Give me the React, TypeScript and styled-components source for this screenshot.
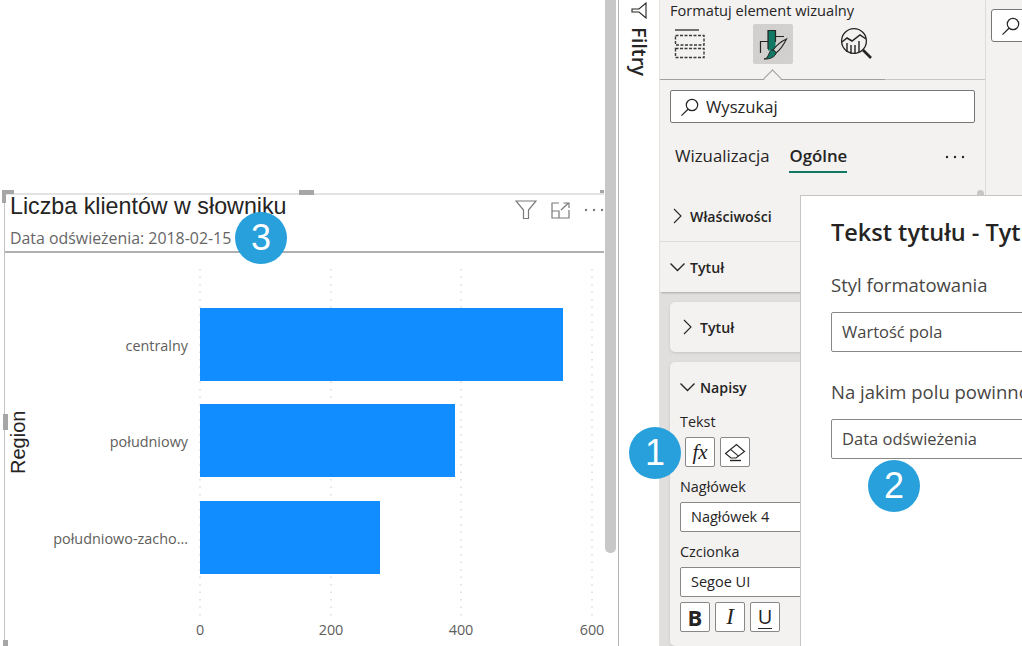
import React from 'react';
import styled, { createGlobalStyle } from 'styled-components';

const SEGOE = `'Open Sans', 'Noto Sans', sans-serif`;

const GlobalStyle = createGlobalStyle`
  html, body {
    margin: 0;
    padding: 0;
    background: #fff;
  }
  * {
    box-sizing: border-box;
  }
`;

function SearchIcon() {
  return (
    <svg width="20" height="20" viewBox="0 0 20 20" fill="none" stroke="#252423" strokeWidth="1.2">
      <circle cx="12" cy="8" r="5.7" />
      <path d="M8 12.2 L1.5 18.6" />
    </svg>
  );
}

function ChevronRightIcon() {
  return (
    <svg width="16" height="16" viewBox="0 0 16 16" fill="none" stroke="#252423" strokeWidth="1.1">
      <path d="M4 1 L11 8 L4 15" />
    </svg>
  );
}

function ChevronDownIcon() {
  return (
    <svg width="16" height="16" viewBox="0 0 16 16" fill="none" stroke="#252423" strokeWidth="1.4">
      <path d="M.5 4.5 L7.5 11.5 L14.5 4.5" />
    </svg>
  );
}

function DotsIcon({ color }: { color: string }) {
  return (
    <svg width="20" height="4" viewBox="0 0 20 4" fill={color}>
      <circle cx="2" cy="2" r="1.2" />
      <circle cx="10" cy="2" r="1.2" />
      <circle cx="18" cy="2" r="1.2" />
    </svg>
  );
}

function FieldsIcon() {
  return (
    <svg width="32" height="32" viewBox="0 0 32 32" fill="none" stroke="#3b3a39" strokeWidth="1.4">
      <path d="M1 2 H25" />
      <rect x="1.5" y="7.5" width="28.5" height="9.5" strokeDasharray="3 1.5" />
      <rect x="1.5" y="20.5" width="28.5" height="9" strokeDasharray="3 1.5" />
    </svg>
  );
}

function PaintIcon() {
  return (
    <svg width="32" height="32" viewBox="0 0 32 32" fill="none">
      <rect x="11" y="2.5" width="7.5" height="20" fill="#117865" />
      <path
        d="M3.5 25 V13.5 H11 M11 21 V2.5 H18.5 V14 M18.5 8.5 H27"
        stroke="#252423"
        strokeWidth="1.2"
      />
      <path
        d="M29.5 11 C25 13 19 18 16 22 L19 25 C23 22 27 16 29.5 11 Z"
        fill="#d2d0ce"
        stroke="#252423"
        strokeWidth="1.1"
      />
      <path
        d="M7 31 C11 30.5 11.5 26 13 23.5 C14.5 21.5 17 21.5 19 24.5 C19 28.5 13 31.5 7 31 Z"
        fill="#117865"
        stroke="#252423"
        strokeWidth="1"
      />
    </svg>
  );
}

function AnalyticsIcon() {
  return (
    <svg width="34" height="34" viewBox="0 0 34 34" fill="none" stroke="#252423" strokeWidth="1.3">
      <circle cx="15" cy="14" r="12.4" />
      <path d="M3 15 L8 11 L13 14 L21 8 L27 12" strokeWidth="1.5" />
      <path d="M8 16 V25 M12 18 V27 M16 18 V27 M20 14 V25" strokeWidth="1.4" />
      <path d="M24 23 L32 31" strokeWidth="2.6" />
    </svg>
  );
}

function EraserIcon() {
  return (
    <svg width="22" height="22" viewBox="0 0 22 22" fill="none" stroke="#252423" strokeWidth="1.1">
      <path d="M1.5 12.5 L12.5 3.5 L20.5 10.5 L12 17 H7 Z" />
      <path d="M6.5 8.4 L14.5 15.2" />
      <path d="M6 19.5 H17" strokeWidth="1.4" />
    </svg>
  );
}

const bars = [
  { label: 'centralny', y: 308, end: 563 },
  { label: 'południowy', y: 404, end: 455 },
  { label: 'południowo-zacho...', y: 501, end: 380 },
];

const ticks = [
  { label: '0', x: 200 },
  { label: '200', x: 331 },
  { label: '400', x: 461 },
  { label: '600', x: 592 },
];

function BarChart() {
  return (
    <ChartSvg viewBox="5 253 599 393">
      {ticks.map((t) => (
        <g key={t.label}>
          <line x1={t.x} x2={t.x} y1="269" y2="617" stroke="#c8c8c8" strokeDasharray="1.5 6" />
          <text x={t.x} y="635" textAnchor="middle" fontSize="14.4" fill="#605e5c" fontFamily={SEGOE}>
            {t.label}
          </text>
        </g>
      ))}
      {bars.map((b) => (
        <g key={b.label}>
          <rect x="200" y={b.y} width={b.end - 200} height="73" fill="#118dff" />
          <text x="188" y={b.y + 43} textAnchor="end" fontSize="14.4" fill="#605e5c" fontFamily={SEGOE}>
            {b.label}
          </text>
        </g>
      ))}
      <text
        transform="translate(25 474) rotate(-90)"
        fontSize="20"
        fill="#252423"
        fontFamily="'Liberation Sans', sans-serif"
      >
        Region
      </text>
    </ChartSvg>
  );
}

export default function App() {
  return (
    <Page>
      <GlobalStyle />
      <Canvas>
        <VisualCard>
          <CardHeader>
            <div>
              <CardTitle>Liczba klientów w słowniku</CardTitle>
              <CardSubtitle>Data odświeżenia: 2018-02-15</CardSubtitle>
            </div>
            <CardActions>
              <svg width="22" height="20" viewBox="0 0 22 20" fill="none" stroke="#7a7a7a" strokeWidth="1.2">
                <path d="M1 1 H21 L13.5 10 V18.5 H8.5 V10 Z" />
              </svg>
              <svg width="19" height="17" viewBox="0 0 19 17" fill="none" stroke="#7a7a7a" strokeWidth="1.2">
                <path d="M8 1 H1 V16 H18 V8" />
                <path d="M1 9 H8 V16" />
                <path d="M10 8 L17.5 1 M12.5 1 H18 V6" />
              </svg>
              <DotsIcon color="#7a7a7a" />
            </CardActions>
          </CardHeader>
          <BarChart />
        </VisualCard>
        <Handle $x={2} $y={190} $w={12} $h={4} />
        <Handle $x={2} $y={190} $w={4} $h={13} />
        <Handle $x={299} $y={190} $w={15} $h={5} />
        <Handle $x={600} $y={190} $w={4} $h={3} />
        <Handle $x={3} $y={414} $w={5} $h={16} />
        <Handle $x={3} $y={640} $w={5} $h={6} />
      </Canvas>
      <ScrollTrack>
        <ScrollThumb />
      </ScrollTrack>
      <FilterPane>
        <svg width="16" height="17" viewBox="0 0 16 17" fill="none" stroke="#252423" strokeWidth="1.1">
          <path d="M15 1 V16 L8 10 H1 V7 H8 Z" />
        </svg>
        <FilterLabel>Filtry</FilterLabel>
      </FilterPane>
      <FormatPane>
        <PaneTitle>Formatuj element wizualny</PaneTitle>
        <IconTabs>
          <IconTab>
            <FieldsIcon />
          </IconTab>
          <IconTab $active>
            <PaintIcon />
          </IconTab>
          <IconTab>
            <AnalyticsIcon />
          </IconTab>
        </IconTabs>
        <SearchBox>
          <SearchIcon />
          <span>Wyszukaj</span>
        </SearchBox>
        <SubTabs>
          <SubTab>Wizualizacja</SubTab>
          <SubTab $active>Ogólne</SubTab>
          <SubTabMore>
            <DotsIcon color="#252423" />
          </SubTabMore>
        </SubTabs>
        <SectionRow $height={45} $top={24} $divider>
          <ChevronRightIcon />
          Właściwości
        </SectionRow>
        <SectionRow $height={50} $raised>
          <ChevronDownIcon />
          Tytuł
        </SectionRow>
        <CardsArea>
          <GroupCard $height={50}>
            <SectionRow $height={50}>
              <ChevronRightIcon />
              Tytuł
            </SectionRow>
          </GroupCard>
          <GroupCard>
            <SectionRow $height={50}>
              <ChevronDownIcon />
              Napisy
            </SectionRow>
            <FieldLabel $top={1}>Tekst</FieldLabel>
            <ButtonRow $left={15}>
              <SquareButton>
                <Fx>fx</Fx>
              </SquareButton>
              <SquareButton>
                <EraserIcon />
              </SquareButton>
            </ButtonRow>
            <FieldLabel $top={11}>Nagłówek</FieldLabel>
            <SelectBox>Nagłówek 4</SelectBox>
            <FieldLabel $top={11}>Czcionka</FieldLabel>
            <SelectBox>Segoe UI</SelectBox>
            <ButtonRow $left={10} $top={5}>
              <SquareButton>
                <BoldGlyph>B</BoldGlyph>
              </SquareButton>
              <SquareButton>
                <ItalicGlyph>I</ItalicGlyph>
              </SquareButton>
              <SquareButton>
                <UnderlineGlyph>U</UnderlineGlyph>
              </SquareButton>
            </ButtonRow>
          </GroupCard>
        </CardsArea>
        <PaneScrollTip />
      </FormatPane>
      <DataPane>
        <DataSearch>
          <SearchIcon />
        </DataSearch>
      </DataPane>
      <Modal>
        <ModalTitle>Tekst tytułu - Tytuł</ModalTitle>
        <ModalLabel $top={25}>Styl formatowania</ModalLabel>
        <ModalSelect>Wartość pola</ModalSelect>
        <ModalLabel $top={27}>Na jakim polu powinno się opierać?</ModalLabel>
        <ModalSelect>Data odświeżenia</ModalSelect>
      </Modal>
      <Badge $x={629} $y={427}>1</Badge>
      <Badge $x={868} $y={460}>2</Badge>
      <Badge $x={235} $y={212}>3</Badge>
    </Page>
  );
}

const Page = styled.div`
  position: relative;
  display: flex;
  width: 1022px;
  height: 646px;
  overflow: hidden;
  background: #fff;
  font-family: ${SEGOE};
  color: #252423;
`;

const Canvas = styled.div`
  position: relative;
  flex: 0 0 605px;
  height: 100%;
  padding: 193px 1px 0 4px;
`;

const VisualCard = styled.div`
  display: flex;
  flex-direction: column;
  height: 453px;
  border-top: 2px solid #e3e3e3;
  border-left: 1px solid #c4c4c4;
`;

const CardHeader = styled.div`
  display: flex;
  justify-content: space-between;
  height: 58px;
  padding: 0 0 0 5px;
  border-bottom: 2px solid #b0b0b0;
`;

const CardTitle = styled.div`
  margin-top: -1px;
  font-family: 'Liberation Sans', sans-serif;
  font-size: 23.25px;
  line-height: 25px;
  color: #252423;
`;

const CardSubtitle = styled.div`
  margin-top: 9px;
  font-size: 15.9px;
  line-height: 20px;
  color: #666;
  white-space: nowrap;
`;

const CardActions = styled.div`
  display: flex;
  align-items: center;
  gap: 14px;
  height: 28px;
  margin-top: 1px;
`;

const ChartSvg = styled.svg`
  display: block;
  width: 599px;
  height: 393px;
`;

const Handle = styled.div<{ $x: number; $y: number; $w: number; $h: number }>`
  position: absolute;
  left: ${(p) => p.$x}px;
  top: ${(p) => p.$y}px;
  width: ${(p) => p.$w}px;
  height: ${(p) => p.$h}px;
  background: #a6a6a6;
`;

const ScrollTrack = styled.div`
  flex: 0 0 11px;
  height: 100%;
`;

const ScrollThumb = styled.div`
  height: 553px;
  background: #c8c8c8;
  border-radius: 0 0 5px 5px;
`;

const FilterPane = styled.div`
  flex: 0 0 42px;
  display: flex;
  flex-direction: column;
  align-items: center;
  margin-left: 2px;
  padding-top: 2px;
  border-left: 1px solid #b3b3b3;
  border-right: 1px solid #e3e3e3;
`;

const FilterLabel = styled.div`
  margin-top: 8px;
  writing-mode: vertical-rl;
  font-size: 20px;
  font-weight: 600;
  line-height: 20px;
`;

const FormatPane = styled.div`
  position: relative;
  display: flex;
  flex-direction: column;
  flex: 0 0 326px;
  height: 100%;
  background: #f3f2f1;
  border-right: 1px solid #dcdbd9;
`;

const PaneTitle = styled.div`
  padding: 0 0 0 10px;
  height: 24px;
  font-size: 14.6px;
  line-height: 20px;
  white-space: nowrap;
`;

const IconTabs = styled.div`
  position: relative;
  display: flex;
  gap: 43px;
  height: 56px;
  padding: 0 0 0 10px;
  border-bottom: 1px solid #c8c6c4;

  &::before {
    content: '';
    position: absolute;
    left: 0;
    bottom: -1px;
    width: 225px;
    height: 1px;
    background: #a19f9d;
  }

  &::after {
    content: '';
    position: absolute;
    left: 106px;
    bottom: -6px;
    width: 12px;
    height: 12px;
    background: #f3f2f1;
    border-top: 1px solid #a19f9d;
    border-left: 1px solid #a19f9d;
    transform: rotate(45deg);
  }
`;

const IconTab = styled.div<{ $active?: boolean }>`
  display: flex;
  align-items: center;
  justify-content: center;
  width: 40px;
  height: 40px;
  border-radius: 2px;
  background: ${(p) => (p.$active ? '#d2d0ce' : 'transparent')};
`;

const SearchBox = styled.div`
  display: flex;
  align-items: center;
  gap: 6px;
  width: 305px;
  height: 33px;
  margin: 10px 0 0 10px;
  padding-left: 9px;
  background: #fff;
  border: 1px solid #777;
  border-radius: 2px;
  font-size: 16.6px;
`;

const SubTabs = styled.div`
  position: relative;
  display: flex;
  align-items: center;
  gap: 20px;
  height: 33px;
  margin: 17px 0 0 15px;
  width: 298px;
`;

const SubTabMore = styled.div`
  position: absolute;
  right: 8px;
  top: 13px;
  line-height: 0;
`;

const SubTab = styled.div<{ $active?: boolean }>`
  height: 33px;
  font-size: 16.8px;
  line-height: 32px;
  font-weight: ${(p) => (p.$active ? 600 : 400)};
  border-bottom: 2px solid ${(p) => (p.$active ? '#117865' : 'transparent')};
`;

const SectionRow = styled.div<{ $height: number; $top?: number; $divider?: boolean; $raised?: boolean }>`
  position: relative;
  display: flex;
  flex: 0 0 ${(p) => p.$height}px;
  align-items: center;
  gap: 4px;
  margin-top: ${(p) => p.$top ?? 0}px;
  padding: 0 0 ${(p) => (p.$divider ? 6 : 0)}px 10px;
  font-size: 14.2px;
  font-weight: 600;
  border-bottom: ${(p) => (p.$divider ? '1px solid #dcdbd9' : 'none')};
  box-shadow: ${(p) => (p.$raised ? '0 2px 2px -1px rgba(0, 0, 0, 0.25)' : 'none')};
`;

const CardsArea = styled.div`
  flex: 1;
  display: flex;
  flex-direction: column;
  gap: 10px;
  padding: 10px 0 0 10px;
  background: #e1dfdd;
`;

const GroupCard = styled.div<{ $height?: number }>`
  display: flex;
  flex-direction: column;
  flex: ${(p) => (p.$height ? `0 0 ${p.$height}px` : '1')};
  background: #f3f2f1;
  border-radius: 5px 0 0 5px;
  box-shadow: 0 1px 3px rgba(0, 0, 0, 0.12);
`;

const FieldLabel = styled.div<{ $top?: number }>`
  margin: ${(p) => p.$top ?? 0}px 0 6px 10px;
  font-size: 14.4px;
  line-height: 18px;
`;

const ButtonRow = styled.div<{ $left: number; $top?: number }>`
  display: flex;
  gap: 5px;
  margin: ${(p) => p.$top ?? 0}px 0 0 ${(p) => p.$left}px;
`;

const SquareButton = styled.div`
  display: flex;
  align-items: center;
  justify-content: center;
  width: 30px;
  height: 30px;
  background: #fff;
  border: 1px solid #8a8886;
  border-radius: 2px;
`;

const Fx = styled.span`
  font-family: 'Liberation Serif', serif;
  font-style: italic;
  font-size: 21px;
`;

const BoldGlyph = styled.span`
  font-size: 22px;
  font-weight: 700;
`;

const ItalicGlyph = styled.span`
  font-family: 'Liberation Serif', serif;
  font-style: italic;
  font-size: 23px;
`;

const UnderlineGlyph = styled.span`
  font-size: 20px;
  line-height: 22px;
  border-bottom: 1.5px solid #252423;
`;

const SelectBox = styled.div`
  width: 200px;
  height: 30px;
  margin-left: 10px;
  padding-left: 10px;
  background: #fff;
  border: 1px solid #8a8886;
  border-radius: 2px;
  font-size: 14.5px;
  line-height: 28px;
`;

const PaneScrollTip = styled.div`
  position: absolute;
  left: 317px;
  top: 190px;
  width: 7px;
  height: 5px;
  border-radius: 4px 4px 0 0;
  background: #c8c6c4;
`;

const DataPane = styled.div`
  flex: 1;
  height: 100%;
  padding: 9px 0 0 5px;
  background: #f3f2f1;
`;

const DataSearch = styled.div`
  display: flex;
  align-items: center;
  width: 60px;
  height: 33px;
  padding-left: 9px;
  background: #fff;
  border: 1px solid #777;
  border-radius: 3px;
`;

const Modal = styled.div`
  position: absolute;
  left: 800px;
  top: 195px;
  width: 400px;
  height: 451px;
  padding: 21px 0 0 30px;
  background: #fff;
  border-top: 1px solid #c8c6c4;
  border-left: 1px solid #c8c6c4;
  white-space: nowrap;
`;

const ModalTitle = styled.div`
  font-size: 23.5px;
  line-height: 30px;
  font-weight: 600;
  color: #252423;
`;

const ModalLabel = styled.div<{ $top: number }>`
  margin-top: ${(p) => p.$top}px;
  font-size: 18.5px;
  line-height: 26px;
  color: #484644;
`;

const ModalSelect = styled.div`
  width: 340px;
  height: 40px;
  margin-top: 14px;
  padding-left: 10px;
  border: 1px solid #8a8886;
  border-radius: 2px;
  font-size: 16.5px;
  line-height: 38px;
  color: #484644;
`;

const Badge = styled.div<{ $x: number; $y: number }>`
  position: absolute;
  left: ${(p) => p.$x}px;
  top: ${(p) => p.$y}px;
  display: flex;
  align-items: center;
  justify-content: center;
  width: 52px;
  height: 52px;
  border-radius: 50%;
  background: #27a0db;
  color: #fff;
  font-family: 'Liberation Sans', sans-serif;
  font-size: 36px;
`;
